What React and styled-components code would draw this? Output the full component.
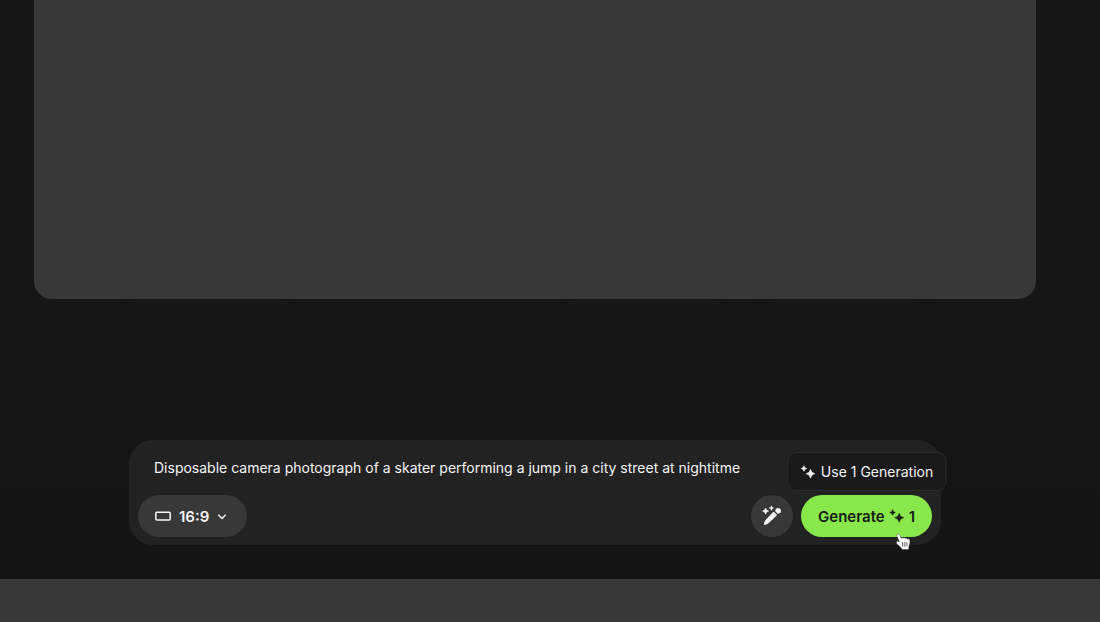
import { useState } from "react";
import styled, { createGlobalStyle } from "styled-components";

const GlobalStyle = createGlobalStyle`
    * {
        box-sizing: border-box;
    }
    body {
        margin: 0;
        background-color: #151515;
        color: #f5f5f5;
        font-family: Inter, "Liberation Sans", sans-serif;
        font-size: 15px;
    }
    button,
    input,
    select {
        font: inherit;
        color: inherit;
    }
`;

const Page = styled.div`
    display: flex;
    flex-direction: column;
    min-height: 100vh;
    background: linear-gradient(#171717, #161616 50%, #141414 93%);
`;

const Main = styled.main`
    display: flex;
    flex: 1;
    flex-direction: column;
    padding: 0 64px 34px 34px;
`;

const Preview = styled.section`
    flex: 1;
    background-color: #383838;
    border-radius: 0 0 18px 18px;
`;

const Gallery = styled.div`
    display: grid;
    grid-template-columns: 16fr 4fr 11fr 12fr 15fr 4fr 16fr;
    height: 141px;
    padding: 0 110px 0 91px;
    overflow: hidden;
`;

const Shade = styled.div`
    grid-column: ${(props) => props.$column};
    align-self: ${(props) => props.$align || "start"};
    height: ${(props) => props.$height};
    background-color: #171717;
    border-radius: 8px;
    filter: blur(3px);
`;

const Composer = styled.form`
    display: flex;
    flex-direction: column;
    gap: 12px;
    width: 100%;
    max-width: 812px;
    margin: 0 auto;
    padding: 12px 9px 8px;
    background-color: #222222;
    border-radius: 24px;
`;

const Prompt = styled.input`
    height: 31px;
    width: 100%;
    padding: 0 16px;
    background: none;
    border: none;
    outline: none;
    font-size: 14px;
`;

const Controls = styled.div`
    display: flex;
    align-items: center;
    justify-content: space-between;
`;

const Actions = styled.div`
    display: flex;
    gap: 8px;
`;

const Ratio = styled.label`
    display: flex;
    align-items: center;
    gap: 7px;
    height: 42px;
    padding: 0 20px 0 16px;
    background-color: #383838;
    border-radius: 21px;
    font-weight: 600;
    cursor: pointer;
`;

const RatioSelect = styled.select`
    appearance: none;
    width: 31px;
    padding: 0;
    background: none;
    border: none;
    outline: none;
    cursor: pointer;
`;

const RoundButton = styled.button`
    display: flex;
    align-items: center;
    justify-content: center;
    width: 42px;
    height: 42px;
    padding: 0;
    background-color: #383838;
    border: none;
    border-radius: 50%;
    cursor: pointer;
`;

const GenerateWrap = styled.div`
    position: relative;
`;

const GenerateButton = styled.button`
    display: flex;
    align-items: center;
    gap: 4px;
    height: 42px;
    padding: 0 17px;
    background-color: #88e84b;
    border: none;
    border-radius: 21px;
    color: #171c13;
    font-weight: 600;
    cursor: pointer;
`;

const Tooltip = styled.div`
    position: absolute;
    bottom: calc(100% + 4px);
    left: 50%;
    display: flex;
    align-items: center;
    gap: 5px;
    height: 39px;
    padding: 0 12px;
    background-color: #1a1a1a;
    border: 1px solid #2c2c2c;
    border-radius: 9px;
    font-size: 14px;
    white-space: nowrap;
    transform: translateX(-50%);
`;

const Cursor = styled.svg`
    position: absolute;
    right: 21px;
    bottom: -14px;
    pointer-events: none;
`;

const BottomBar = styled.footer`
    height: 43px;
    background-color: #383838;
`;

function Sparkles() {
    return (
        <svg width="16" height="16" viewBox="0 0 16 16" fill="currentColor" stroke="currentColor" aria-hidden="true">
            <path d="M3.6 1.7Q4 4.1 6.4 4.5Q4 4.9 3.6 7.3Q3.2 4.9 .8 4.5Q3.2 4.1 3.6 1.7Z" strokeWidth=".6" />
            <path d="M10.2 5.3Q10.8 9.1 14.6 9.7Q10.8 10.3 10.2 14.1Q9.6 10.3 5.8 9.7Q9.6 9.1 10.2 5.3Z" strokeWidth=".7" />
        </svg>
    );
}

function MagicPen() {
    return (
        <svg width="22" height="22" viewBox="0 0 22 22" fill="currentColor" stroke="currentColor" aria-hidden="true">
            <path d="M12.6 7.1L15.6 10.1L7.6 17.7Q5.6 19.2 3.4 19.4Q3.5 17 5 15Z" strokeWidth="1" strokeLinejoin="round" />
            <path d="M14.2 6.3Q14.3 3.4 17 3.1Q19.9 3.1 20 6Q19.7 8.7 16.7 8.8Z" stroke="none" />
            <path d="M4.6 3.1Q5 5.7 7.6 6.1Q5 6.5 4.6 9.1Q4.2 6.5 1.6 6.1Q4.2 5.7 4.6 3.1Z" strokeWidth=".7" />
            <path d="M10.4 1Q10.7 2.8 12.5 3.1Q10.7 3.4 10.4 5.2Q10.1 3.4 8.3 3.1Q10.1 2.8 10.4 1Z" strokeWidth=".6" />
        </svg>
    );
}

function HandCursor() {
    return (
        <Cursor width="15" height="18" viewBox="0 0 15 18" aria-hidden="true">
            <path
                d="M1.2 1.4Q2.5.2 3.6 1.8L5.2 5.3Q6.1 4 7.2 5Q8.4 4.1 9.3 5.3Q10.5 4.5 11.4 5.9Q13.2 5.1 13.8 7.1Q14.3 10.3 13 13L12.7 16.6H5.9L5.3 15L.8 10.7Q-.3 8.4 1.7 8.1L3.4 8.9L1 3.3Q.5 2.2 1.2 1.4Z"
                fill="#ffffff"
                stroke="#1b1b1b"
                strokeWidth=".4"
                strokeLinejoin="round"
            />
            <path d="M6.7 9V13.5M8.8 9V13.5M10.9 9V13.5" stroke="#1b1b1b" strokeWidth=".7" />
        </Cursor>
    );
}

function App() {
    const [prompt, setPrompt] = useState(
        "Disposable camera photograph of a skater performing a jump in a city street at nightitme"
    );
    const [ratio, setRatio] = useState("16:9");

    return (
        <>
            <GlobalStyle />
            <Page>
                <Main>
                    <Preview />
                    <Gallery>
                        <Shade $column="1" $height="70px" />
                        <Shade $column="3" $height="100px" $align="end" />
                        <Shade $column="5" $height="112px" />
                        <Shade $column="7" $height="98px" />
                    </Gallery>
                    <Composer onSubmit={(e) => e.preventDefault()}>
                        <Prompt
                            type="text"
                            aria-label="Prompt"
                            value={prompt}
                            onChange={(e) => setPrompt(e.target.value)}
                        />
                        <Controls>
                            <Ratio>
                                <svg width="18" height="16" viewBox="0 0 18 16" fill="none" aria-hidden="true">
                                    <rect x="1.8" y="4.3" width="14.4" height="7.8" rx="1" stroke="currentColor" strokeWidth="1.5" />
                                </svg>
                                <RatioSelect
                                    aria-label="Aspect ratio"
                                    value={ratio}
                                    onChange={(e) => setRatio(e.target.value)}
                                >
                                    <option>16:9</option>
                                    <option>4:3</option>
                                    <option>1:1</option>
                                </RatioSelect>
                                <svg width="10" height="10" viewBox="0 0 10 10" fill="none" aria-hidden="true">
                                    <path d="M1.3 3.8L5 7.5L8.7 3.8" stroke="currentColor" strokeWidth="1.5" />
                                </svg>
                            </Ratio>
                            <Actions>
                                <RoundButton type="button" aria-label="Enhance prompt">
                                    <MagicPen />
                                </RoundButton>
                                <GenerateWrap>
                                    <GenerateButton type="submit">
                                        Generate
                                        <Sparkles />
                                        <span>1</span>
                                    </GenerateButton>
                                    <Tooltip role="tooltip">
                                        <Sparkles />
                                        Use 1 Generation
                                    </Tooltip>
                                    <HandCursor />
                                </GenerateWrap>
                            </Actions>
                        </Controls>
                    </Composer>
                </Main>
                <BottomBar />
            </Page>
        </>
    );
}

export default App;
